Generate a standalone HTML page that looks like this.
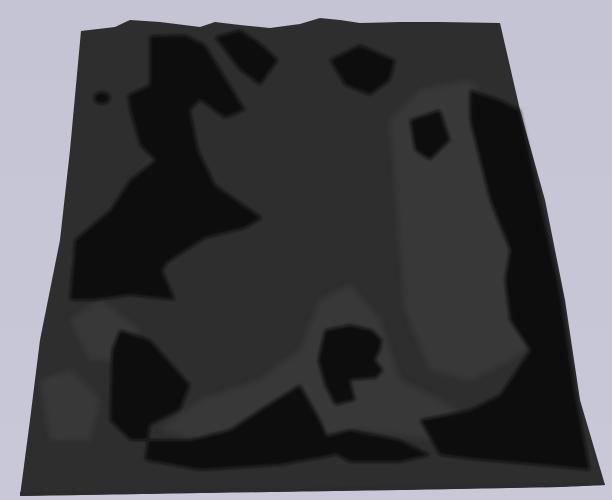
<!DOCTYPE html>
<html><head><style>
html,body{margin:0;padding:0;width:612px;height:500px;overflow:hidden;background:#c6c6d6;}
svg{display:block}
</style></head><body>
<svg width="612" height="500" viewBox="0 0 612 500" xmlns="http://www.w3.org/2000/svg">
<defs>
<linearGradient id="bg" x1="0" y1="0" x2="0" y2="1">
<stop offset="0" stop-color="#c4c4d4"/><stop offset="1" stop-color="#c8c8d8"/>
</linearGradient>
<filter id="b1"><feGaussianBlur stdDeviation="3"/></filter>
<filter id="b2"><feGaussianBlur stdDeviation="1.5"/></filter>
</defs>
<rect width="612" height="500" fill="url(#bg)"/>
<path d="M81,31 L115,27 L130,20 L160,22 L200,27 L215,22 L240,25 L270,28 L300,24 L320,18 L340,20 L360,23 L400,22 L440,22 L500,23 L520,110 L545,200 L565,300 L580,400 L605,485 L560,487 L400,490 L200,493 L20,496 L30,420 L40,340 L60,240 L70,150 Z" fill="#2e2e2e"/>
<g filter="url(#b1)" fill="#393939">
<path d="M390,120 L420,90 L470,80 L500,120 L520,200 L530,280 L540,340 L510,360 L470,380 L430,370 L405,310 L400,250 L395,180 Z"/>
<path d="M160,430 L200,400 L260,380 L300,350 L320,300 L350,285 L380,320 L400,380 L440,400 L470,420 L430,440 L360,430 L320,440 L270,440 L200,440 Z"/>
<path d="M70,260 L90,240 L110,210 L150,160 L170,150 L150,200 L110,240 L90,280 Z"/>
<path d="M70,320 L100,300 L140,330 L120,360 L90,360 Z"/>
<path d="M40,380 L70,370 L100,400 L90,440 L50,440 Z"/>
</g>
<g filter="url(#b2)" fill="#0d0d0d">
<path d="M150,36 L185,35 L205,45 L245,110 L225,118 L200,100 L190,110 L198,150 L215,185 L262,218 L245,228 L205,238 L168,262 L162,270 L175,300 L130,295 L95,300 L70,300 L75,240 L110,210 L130,180 L155,160 L140,145 L130,110 L128,95 L150,85 Z"/>
<path d="M215,37 L240,30 L262,45 L278,60 L260,85 L240,70 Z"/>
<path d="M112,350 L120,330 L150,340 L190,385 L180,410 L150,425 L145,460 L200,470 L280,465 L335,455 L320,420 L300,385 L260,410 L230,430 L190,440 L160,440 L130,440 L110,420 Z"/>
<path d="M325,330 L350,325 L372,330 L382,340 L380,350 L375,360 L383,370 L376,378 L350,380 L355,400 L335,405 L325,385 L318,360 Z"/>
<path d="M470,90 L500,100 L520,110 L540,200 L560,290 L575,390 L590,470 L540,465 L480,460 L440,455 L420,420 L470,410 L500,395 L530,350 L510,320 L505,280 L510,250 L490,200 L480,160 L470,120 Z"/>
<path d="M310,440 L350,430 L400,440 L430,455 L400,462 L350,462 Z"/>
<path d="M410,120 L440,110 L450,140 L430,160 L415,150 Z"/>
<path d="M330,60 L360,45 L395,60 L390,80 L370,95 L345,85 Z"/>
<ellipse cx="102" cy="98" rx="8" ry="6"/>
</g>
<path d="M20,496 L200,493 L400,490 L560,487 L605,485 L604,482 L20,492 Z" fill="#2c2c2c"/>
</svg>
</body></html>
